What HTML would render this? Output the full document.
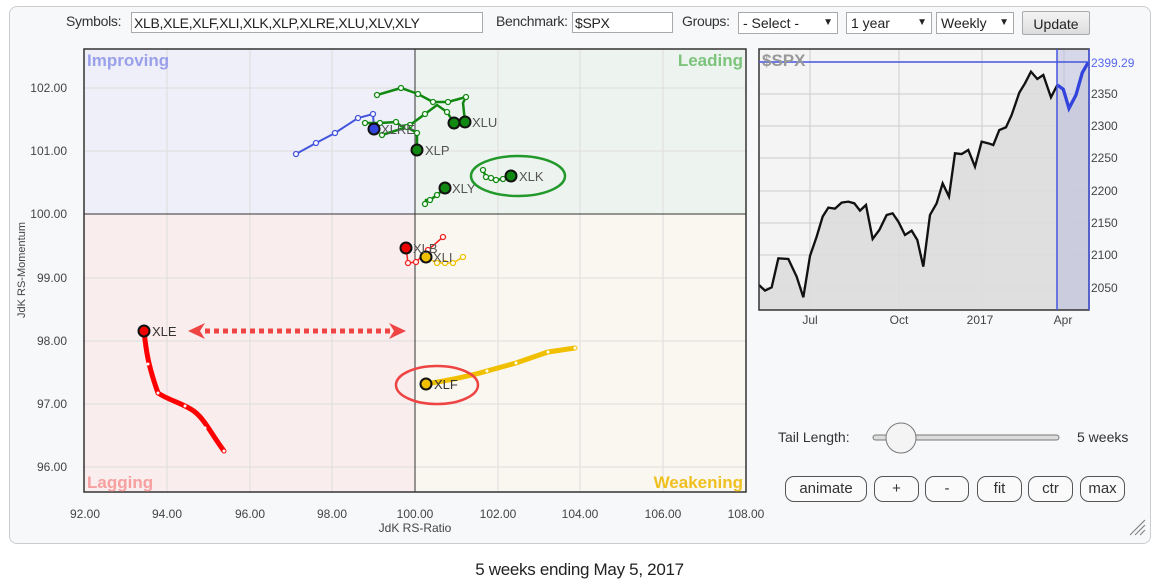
<!DOCTYPE html>
<html><head><meta charset="utf-8"><style>
body{margin:0;width:1159px;height:584px;background:#fff;font-family:"Liberation Sans",sans-serif;position:relative;overflow:hidden}
.panel{position:absolute;left:9px;top:6px;width:1140px;height:536px;border:1px solid #ccc;border-radius:8px;background:#f7f8fa}
.top{position:absolute;top:13px;font-size:14px;color:#333;letter-spacing:-0.3px}
.inp{position:absolute;top:12px;height:21px;border:1px solid #aaa;background:#fff;font-size:14px;line-height:21px;padding-left:2px;box-sizing:border-box;color:#222;letter-spacing:-0.3px}
.sel{position:absolute;top:12px;height:22px;border:1px solid #aaa;background:#fff;font-size:14px;line-height:20px;padding-left:4px;box-sizing:border-box;color:#222}
.sel:after{content:"▼";position:absolute;right:4px;font-size:10px}
.btn{position:absolute;top:476px;height:26px;border:1px solid #555;border-radius:9px;box-sizing:border-box;background:#fafafa;font-size:15px;text-align:center;line-height:24px;color:#333}
</style></head><body>
<div class="panel"></div>
<div class="top" style="left:66px">Symbols:</div>
<div class="inp" style="left:131px;width:352px">XLB,XLE,XLF,XLI,XLK,XLP,XLRE,XLU,XLV,XLY</div>
<div class="top" style="left:496px">Benchmark:</div>
<div class="inp" style="left:572px;width:101px">$SPX</div>
<div class="top" style="left:682px">Groups:</div>
<div class="sel" style="left:738px;width:100px">- Select -</div>
<div class="sel" style="left:846px;width:86px">1 year</div>
<div class="sel" style="left:936px;width:78px">Weekly</div>
<div style="position:absolute;left:1022px;top:11px;width:68px;height:24px;border:1px solid #aaa;border-radius:2px;background:linear-gradient(#f4f4f4,#ddd);font-size:14px;text-align:center;line-height:24px;color:#222;box-sizing:border-box">Update</div>

<svg width="1159" height="584" style="position:absolute;left:0;top:0" font-family="Liberation Sans, sans-serif">
<rect x="84" y="49" width="331" height="165" fill="#eeeff8"/>
<rect x="415" y="49" width="331" height="165" fill="#edf3ee"/>
<rect x="84" y="214" width="331" height="278" fill="#f9eded"/>
<rect x="415" y="214" width="331" height="278" fill="#f9f7ef"/>
<g stroke="#ddd" stroke-width="1">
<line x1="167" y1="49" x2="167" y2="492"/><line x1="250" y1="49" x2="250" y2="492"/><line x1="332" y1="49" x2="332" y2="492"/><line x1="498" y1="49" x2="498" y2="492"/><line x1="580" y1="49" x2="580" y2="492"/><line x1="663" y1="49" x2="663" y2="492"/>
<line x1="84" y1="88" x2="746" y2="88"/><line x1="84" y1="151" x2="746" y2="151"/><line x1="84" y1="278" x2="746" y2="278"/><line x1="84" y1="341" x2="746" y2="341"/><line x1="84" y1="404" x2="746" y2="404"/><line x1="84" y1="467" x2="746" y2="467"/>
</g>
<rect x="84" y="49" width="662" height="443" fill="none" stroke="#333" stroke-width="1.5"/>
<line x1="415" y1="49" x2="415" y2="492" stroke="#333"/><line x1="84" y1="214" x2="746" y2="214" stroke="#333"/>
<g font-size="17" font-weight="bold">
<text x="87" y="66" fill="#9aa0ea">Improving</text>
<text x="743" y="66" fill="#7cc47c" text-anchor="end">Leading</text>
<text x="87" y="488" fill="#f7a0a0">Lagging</text>
<text x="743" y="488" fill="#f0c020" text-anchor="end">Weakening</text>
</g>
<g font-size="12" fill="#444" text-anchor="end">
<text x="67" y="92">102.00</text><text x="67" y="155">101.00</text><text x="67" y="218">100.00</text><text x="67" y="282">99.00</text><text x="67" y="345">98.00</text><text x="67" y="408">97.00</text><text x="67" y="471">96.00</text>
</g>
<g font-size="12" fill="#444" text-anchor="middle">
<text x="85" y="518">92.00</text><text x="167" y="518">94.00</text><text x="250" y="518">96.00</text><text x="332" y="518">98.00</text><text x="415" y="518">100.00</text><text x="498" y="518">102.00</text><text x="580" y="518">104.00</text><text x="663" y="518">106.00</text><text x="746" y="518">108.00</text>
<text x="415" y="532">JdK RS-Ratio</text>
</g>
<text transform="translate(25,270) rotate(-90)" font-size="11" fill="#444" text-anchor="middle">JdK RS-Momentum</text>

<!-- blue XLRE -->
<polyline points="296,154 316,143 335,133 358,118 373,114 374,129" fill="none" stroke="#4455dd" stroke-width="2"/>
<!-- green -->
<g fill="none" stroke="#118811" stroke-width="2.5">
<polyline points="377,95 401,88 418,94 433,102 448,102 466,97 463,103 465,122"/>
<polyline points="365,123 380,123 396,122 401,126 410,125 425,114 437,105 447,112 454,123"/>
<polyline points="382,135 407,127 417,133 417,150"/>
<polyline points="483,170 486,177 491,178 496,180 503,179 511,176"/>
<polyline points="425,204 426,200 430,200 437,195 445,188"/>
</g>
<g fill="#fff" stroke="#118811" stroke-width="1.3">
<circle cx="377" cy="95" r="2.5"/><circle cx="401" cy="88" r="2.5"/><circle cx="418" cy="94" r="2.5"/><circle cx="433" cy="102" r="2.5"/><circle cx="448" cy="102" r="2.5"/><circle cx="466" cy="97" r="2.5"/>
<circle cx="365" cy="123" r="2.5"/><circle cx="380" cy="123" r="2.5"/><circle cx="396" cy="122" r="2.5"/><circle cx="410" cy="125" r="2.5"/><circle cx="425" cy="114" r="2.5"/><circle cx="447" cy="112" r="2.5"/>
<circle cx="382" cy="135" r="2.5"/><circle cx="407" cy="127" r="2.5"/><circle cx="417" cy="133" r="2.5"/>
<circle cx="483" cy="170" r="2.5"/><circle cx="486" cy="177" r="2.5"/><circle cx="491" cy="178" r="2.5"/><circle cx="496" cy="180" r="2.5"/><circle cx="503" cy="179" r="2.5"/>
<circle cx="425" cy="204" r="2.5"/><circle cx="430" cy="200" r="2.5"/><circle cx="437" cy="195" r="2.5"/>
</g>
<g fill="#fff" stroke="#4455dd" stroke-width="1.3"><circle cx="296" cy="154" r="2.5"/><circle cx="316" cy="143" r="2.5"/><circle cx="335" cy="133" r="2.5"/><circle cx="358" cy="118" r="2.5"/><circle cx="373" cy="114" r="2.5"/></g>
<!-- XLB / XLI -->
<polyline points="406,248 408,263 416,262 428,250 443,237" fill="none" stroke="#ee2222" stroke-width="1.5"/>
<polyline points="426,257 437,263 445,263 453,263 463,257" fill="none" stroke="#f0c000" stroke-width="1.5"/>
<g fill="#fff" stroke-width="1.3"><g stroke="#ee2222"><circle cx="408" cy="263" r="2.5"/><circle cx="416" cy="262" r="2.5"/><circle cx="428" cy="250" r="2.5"/><circle cx="443" cy="237" r="2.5"/></g>
<g stroke="#f0c000"><circle cx="437" cy="263" r="2.5"/><circle cx="445" cy="263" r="2.5"/><circle cx="453" cy="263" r="2.5"/><circle cx="463" cy="257" r="2.5"/></g></g>
<!-- XLE -->
<path d="M144,331 C146,350 148,365 158,393 C168,400 185,404 195,412 C205,420 212,435 224,451" fill="none" stroke="#ff0000" stroke-width="5" stroke-linecap="round"/>
<g fill="#fff"><circle cx="148" cy="364" r="1.5"/><circle cx="158" cy="393" r="1.5"/><circle cx="185" cy="406" r="1.5"/><circle cx="205" cy="428" r="1.5"/><circle cx="224" cy="451" r="1.5"/></g>
<!-- XLF -->
<path d="M426,384 C450,380 470,376 487,371 L516,363 L548,352 L575,348" fill="none" stroke="#f0c000" stroke-width="5" stroke-linecap="round"/>
<g fill="#fff"><circle cx="487" cy="371" r="1.5"/><circle cx="516" cy="363" r="1.5"/><circle cx="548" cy="352" r="1.5"/><circle cx="575" cy="348" r="1.5"/></g>
<!-- heads -->
<g stroke="#111" stroke-width="2">
<circle cx="374" cy="129" r="5.5" fill="#3344dd"/>
<circle cx="454" cy="123" r="5.5" fill="#118811"/><circle cx="465" cy="122" r="5.5" fill="#118811"/>
<circle cx="417" cy="150" r="5.5" fill="#118811"/><circle cx="511" cy="176" r="5.5" fill="#118811"/><circle cx="445" cy="188" r="5.5" fill="#118811"/>
<circle cx="406" cy="248" r="5.5" fill="#ee0000"/><circle cx="426" cy="257" r="5.5" fill="#f0c000"/>
<circle cx="144" cy="331" r="5.5" fill="#ee0000"/><circle cx="426" cy="384" r="5.5" fill="#f0c000"/>
</g>
<g font-size="13" fill="#555">
<text x="381" y="134">XLRE</text><text x="472" y="127">XLU</text><text x="425" y="155">XLP</text><text x="519" y="181">XLK</text><text x="452" y="193">XLY</text>
<text x="413" y="253">XLB</text><text x="433" y="262">XLI</text><text x="152" y="336" fill="#333">XLE</text><text x="434" y="389" fill="#333">XLF</text>
</g>
<ellipse cx="518" cy="176" rx="47" ry="20" fill="none" stroke="#22992b" stroke-width="2.5"/>
<ellipse cx="437" cy="385" rx="41" ry="19" fill="none" stroke="#ee4444" stroke-width="2.5"/>
<line x1="205" y1="331" x2="392" y2="331" stroke="#ee4444" stroke-width="5" stroke-dasharray="5,4"/>
<polygon points="188,331 205,323 200,331 205,339" fill="#ee4444"/>
<polygon points="406,331 389,323 394,331 389,339" fill="#ee4444"/>

<!-- right chart -->
<rect x="759" y="49" width="330" height="261" fill="#f4f4f4"/>
<g stroke="#ccc"><line x1="810" y1="49" x2="810" y2="310"/><line x1="899" y1="49" x2="899" y2="310"/><line x1="982" y1="49" x2="982" y2="310"/><line x1="1064" y1="49" x2="1064" y2="310"/>
<line x1="759" y1="94" x2="1089" y2="94"/><line x1="759" y1="126" x2="1089" y2="126"/><line x1="759" y1="158" x2="1089" y2="158"/><line x1="759" y1="191" x2="1089" y2="191"/><line x1="759" y1="223" x2="1089" y2="223"/><line x1="759" y1="255" x2="1089" y2="255"/><line x1="759" y1="288" x2="1089" y2="288"/></g>
<g transform="translate(750,40) scale(0.3333)">
<polygon fill="#ddd" fill-opacity="0.9" points="27,810 27,735 45,752 65,742 85,655 115,657 140,710 160,772 180,648 200,590 218,530 235,503 255,506 275,488 295,485 313,490 330,512 348,495 368,597 388,570 410,525 428,520 445,545 465,585 485,572 502,600 520,680 540,525 560,490 578,430 597,470 615,340 635,342 655,330 675,380 695,305 715,310 730,315 748,270 768,262 785,225 808,158 825,130 843,95 862,117 880,105 903,172 922,135 940,148 957,205 978,165 997,98 1015,67 1015,810"/>
<rect x="922" y="27" width="93" height="783" fill="#b8bce0" fill-opacity="0.5"/>
<polyline fill="none" stroke="#111" stroke-width="7" points="27,735 45,752 65,742 85,655 115,657 140,710 160,772 180,648 200,590 218,530 235,503 255,506 275,488 295,485 313,490 330,512 348,495 368,597 388,570 410,525 428,520 445,545 465,585 485,572 502,600 520,680 540,525 560,490 578,430 597,470 615,340 635,342 655,330 675,380 695,305 715,310 730,315 748,270 768,262 785,225 808,158 825,130 843,95 862,117 880,105 903,172 922,135"/>
<polyline fill="none" stroke="#3344dd" stroke-width="10" points="922,135 940,148 957,205 978,165 997,98 1015,67"/>
</g>
<rect x="759" y="49" width="330" height="261" fill="none" stroke="#333" stroke-width="1.5"/>
<line x1="1057" y1="49" x2="1057" y2="310" stroke="#4455dd" stroke-width="1.5"/>
<line x1="1089" y1="49" x2="1089" y2="310" stroke="#4455dd" stroke-width="1.5"/>
<line x1="759" y1="62" x2="1089" y2="62" stroke="#4455dd" stroke-width="1.5"/>
<text x="762" y="66" font-size="17" font-weight="bold" fill="#999">$SPX</text>
<text x="1091" y="67" font-size="12" fill="#5566ee">2399.29</text>
<g font-size="12" fill="#444"><text x="1091" y="98">2350</text><text x="1091" y="130">2300</text><text x="1091" y="162">2250</text><text x="1091" y="195">2200</text><text x="1091" y="227">2150</text><text x="1091" y="259">2100</text><text x="1091" y="292">2050</text>
<g text-anchor="middle"><text x="810" y="324">Jul</text><text x="899" y="324">Oct</text><text x="980" y="324">2017</text><text x="1063" y="324">Apr</text></g></g>

<text x="778" y="442" font-size="14" fill="#333">Tail Length:</text>
<rect x="873" y="435" width="186" height="5" rx="2.5" fill="#ddd" stroke="#777"/>
<circle cx="901" cy="438" r="15" fill="#f4f4f4" stroke="#777"/>
<text x="1077" y="442" font-size="14" fill="#333">5 weeks</text>
<g stroke="#888" stroke-width="1.2"><line x1="1130" y1="535" x2="1145" y2="520"/><line x1="1135" y1="535" x2="1145" y2="525"/><line x1="1140" y1="535" x2="1145" y2="530"/></g>
</svg>
<div class="btn" style="left:785px;width:82px">animate</div>
<div class="btn" style="left:874px;width:45px">+</div>
<div class="btn" style="left:925px;width:44px">-</div>
<div class="btn" style="left:977px;width:45px">fit</div>
<div class="btn" style="left:1028px;width:45px">ctr</div>
<div class="btn" style="left:1080px;width:45px">max</div>
<div style="position:absolute;left:0;width:1159px;top:560px;text-align:center;font-size:17px;color:#222;letter-spacing:-0.3px">5 weeks ending May 5, 2017</div>
</body></html>
